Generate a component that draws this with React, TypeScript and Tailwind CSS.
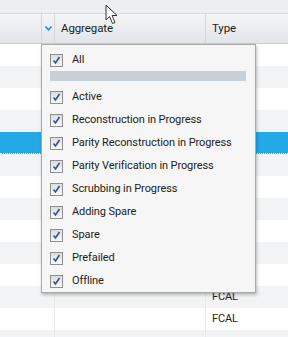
import React from 'react';

const rows = Array.from({ length: 14 }, (_, i) => i);

const items = [
    'Active',
    'Reconstruction in Progress',
    'Parity Reconstruction in Progress',
    'Parity Verification in Progress',
    'Scrubbing in Progress',
    'Adding Spare',
    'Spare',
    'Prefailed',
    'Offline',
];

const CheckBox = () => (
    <span className="w-[13px] h-[13px] shrink-0 border border-[#8f8f8f] bg-gradient-to-b from-[#dcdcdc] to-[#fafafa] flex items-center justify-center">
        <svg width="9" height="9" viewBox="0 0 9 9">
            <path d="M1.5 4.5 L3.5 7 L7.5 1" fill="none" stroke="#3c4f8a" strokeWidth="1.6" />
        </svg>
    </span>
);

export default function App() {
    return (
        <div className="relative w-[288px] h-[337px] overflow-hidden bg-white text-[#222] font-['Roboto','Liberation_Sans',sans-serif] text-[11px] tracking-[-0.1px]">
            <div className="h-[14px] bg-[#eceef0] border-b border-[#d6d9dc]" />
            {/* header */}
            <div className="h-[30px] flex bg-gradient-to-b from-[#f4f5f6] to-[#e2e5e8] border-b border-[#c9cdd1]">
                <div className="w-[42px] border-r border-[#d4d7da]" />
                <div className="w-[13px] flex items-center justify-center border-r border-[#d4d7da]">
                    <svg width="7" height="5" viewBox="0 0 7 5">
                        <path d="M0.5 0.5 L3.5 3.8 L6.5 0.5" fill="none" stroke="#2a8fd0" strokeWidth="1.6" />
                    </svg>
                </div>
                <div className="w-[151px] flex items-center pl-[6px] pt-[1px] text-[11.5px] border-r border-[#d4d7da]">Aggregate</div>
                <div className="flex-1 flex items-center pl-[6px] pt-[1px] text-[11.5px]">Type</div>
            </div>
            {/* rows */}
            <div>
                {rows.map((i) => {
                    const selected = i === 4;
                    const bg = selected ? 'bg-[#23a9e6] border-b border-dotted border-[#eaf6fd]' : i % 2 ? 'bg-[#f2f3f4]' : 'bg-white';
                    return (
                        <div key={i} className={`h-[22px] flex ${bg}`}>
                            <div className={`w-[55px] ${selected ? '' : 'border-r border-[#e6e8ea]'}`} />
                            <div className={`w-[151px] ${selected ? '' : 'border-r border-[#e6e8ea]'}`} />
                            <div className="flex-1 flex items-center pl-[6px]">{i === 11 || i === 12 ? 'FCAL' : ''}</div>
                        </div>
                    );
                })}
            </div>
            {/* dropdown */}
            <div className="absolute left-[41px] top-[44px] w-[215px] h-[249px] bg-[#f6f6f6] border border-[#a9a9a9] shadow-[1px_2px_3px_rgba(0,0,0,0.25)] pt-[8px] px-[8px]">
                <div className="h-[14px] flex items-center gap-[9px]">
                    <CheckBox />
                    <span>All</span>
                </div>
                <div className="mt-[4px] h-[10px] mr-[1px] bg-[#c7d0d8]" />
                <div className="mt-[5px] flex flex-col">
                    {items.map((t) => (
                        <div key={t} className="h-[23px] flex items-center gap-[9px]">
                            <CheckBox />
                            <span>{t}</span>
                        </div>
                    ))}
                </div>
            </div>
            {/* cursor */}
            <svg className="absolute left-[105px] top-[4px]" width="14" height="22" viewBox="0 0 14 22">
                <path d="M1 1 L1 16 L4.5 12.5 L7.5 19.5 L10 18.5 L7 11.5 L12 11.5 Z" fill="#fff" stroke="#333" strokeWidth="1" strokeLinejoin="round" />
            </svg>
        </div>
    );
}
